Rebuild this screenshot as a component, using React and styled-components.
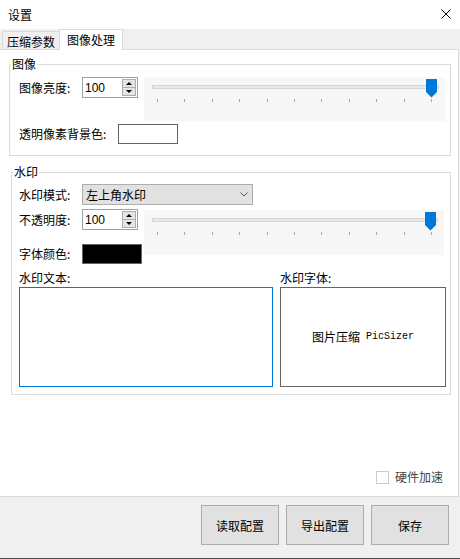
import styled, { createGlobalStyle } from "styled-components";

const GlobalStyle = createGlobalStyle`
  html, body {
    margin: 0;
    padding: 0;
    background: #ffffff;
  }
  body {
    font-family: "Noto Sans CJK SC", "Liberation Sans", sans-serif;
    font-size: 12px;
    line-height: 16px;
    color: #000;
  }
  * {
    box-sizing: border-box;
  }
`;

const Window = styled.div`
  width: 460px;
  height: 559px;
  display: flex;
  flex-direction: column;
  background: #f0f0f0;
  overflow: hidden;
`;

const TitleBar = styled.div`
  height: 29px;
  flex-shrink: 0;
  background: #ffffff;
  display: flex;
  align-items: center;
  justify-content: space-between;
  padding: 0 9px 0 8px;
`;

const CloseButton = styled.div`
  width: 10px;
  height: 10px;
  display: flex;
  margin-top: -2px;
`;

const TabStrip = styled.div`
  height: 20px;
  flex-shrink: 0;
  display: flex;
  align-items: flex-end;
  padding-left: 2px;
`;

const Tab = styled.div`
  position: relative;
  display: flex;
  align-items: center;
  justify-content: center;
  border: 1px solid #d9d9d9;
  border-bottom: none;
  width: ${(p) => (p.$active ? "64px" : "58px")};
  height: ${(p) => (p.$active ? "21px" : "18px")};
  margin-bottom: ${(p) => (p.$active ? "-1px" : "0")};
  margin-left: ${(p) => (p.$active ? "-1px" : "0")};
  padding-top: ${(p) => (p.$active ? "0" : "3px")};
  background: ${(p) => (p.$active ? "#ffffff" : "#f0f0f0")};
  z-index: ${(p) => (p.$active ? 1 : 0)};
`;

const Panel = styled.div`
  flex: 1;
  min-height: 0;
  margin-right: 1px;
  background: #ffffff;
  border: 1px solid #d9d9d9;
  border-left: none;
  display: flex;
  flex-direction: column;
  padding: 14px 7px 11px 9px;
`;

const GroupBox = styled.div`
  border: 1px solid #dcdcdc;
  margin-left: ${(p) => p.$ml || 0}px;
  margin-top: ${(p) => p.$mt || 0}px;
`;

const Legend = styled.div`
  width: fit-content;
  margin: -9px 0 0 1px;
  padding: 0 1px;
  background: #ffffff;
  line-height: 16px;
`;

const GroupBody = styled.div`
  display: flex;
  flex-direction: column;
  gap: ${(p) => p.$gap || 0}px;
  padding: ${(p) => p.$pad};
`;

const Row = styled.div`
  display: flex;
  align-items: flex-start;
`;

const FieldLabel = styled.div`
  flex-shrink: 0;
  width: ${(p) => (p.$w ? `${p.$w}px` : "auto")};
  height: ${(p) => p.$h || 21}px;
  display: flex;
  align-items: center;
  white-space: nowrap;
`;

const SpinBox = styled.div`
  width: 56px;
  height: 21px;
  border: 1px solid #a0a0a0;
  background: #ffffff;
  display: flex;
  align-items: center;
  padding-left: 2px;
  font-family: "Liberation Sans", Arial, sans-serif;
  font-size: 12px;
`;

const Spinner = styled.div`
  margin-left: auto;
  margin-right: 1px;
  width: 14px;
  height: 17px;
  display: flex;
  flex-direction: column;
  border: 1px solid #adadad;
  background: #e5e5e5;
`;

const SpinButton = styled.div`
  flex: 1;
  display: flex;
  align-items: center;
  justify-content: center;
  border-top: ${(p) => (p.$down ? "1px solid #adadad" : "none")};

  &::after {
    content: "";
    width: 0;
    height: 0;
    border-left: 3px solid transparent;
    border-right: 3px solid transparent;
    ${(p) =>
      p.$down ? "border-top: 3px solid #000;" : "border-bottom: 3px solid #000;"}
  }
`;

const SliderBox = styled.div`
  flex-shrink: 0;
  width: ${(p) => p.$w}px;
  height: ${(p) => p.$h}px;
  margin-left: ${(p) => p.$ml || 0}px;
  margin-top: ${(p) => p.$mt || 0}px;
  background: #f7f7f7;
  display: flex;
  grid-column: 3;
  grid-row: 2 / 4;
`;

const ColorBox = styled.div`
  width: 60px;
  height: 20px;
  border: 1px solid #646464;
  background: ${(p) => p.$color};
`;

const WatermarkGrid = styled.div`
  display: grid;
  grid-template-columns: 63px 62px 300px;
  grid-template-rows: 25px 35px 20px;
  align-items: start;
`;

const Combo = styled.div`
  grid-column: 2 / 4;
  width: 171px;
  height: 21px;
  border: 1px solid #adadad;
  background: #e1e1e1;
  display: flex;
  align-items: center;
  justify-content: space-between;
  padding: 0 4px 0 3px;
`;

const TextGrid = styled.div`
  display: grid;
  grid-template-columns: 254px 166px;
  column-gap: 7px;
  row-gap: 1px;
  margin-top: 6px;
`;

const WatermarkText = styled.textarea`
  display: block;
  width: 254px;
  height: 100px;
  margin: 0;
  padding: 0;
  resize: none;
  outline: none;
  border: 1px solid #0078d7;
  font-family: inherit;
  font-size: 12px;
`;

const FontPreview = styled.div`
  height: 100px;
  border: 1px solid #646464;
  display: flex;
  align-items: center;
  justify-content: center;
  gap: 6px;
`;

const PreviewLatin = styled.span`
  font-family: "Liberation Mono", "DejaVu Sans Mono", monospace;
  font-size: 10px;
`;

const CheckRow = styled.label`
  margin-top: auto;
  margin-right: 8px;
  align-self: flex-end;
  display: flex;
  align-items: center;
  gap: 6px;
  color: #444;
`;

const CheckBox = styled.span`
  width: 13px;
  height: 13px;
  border: 1px solid #cccccc;
  background: #ffffff;
`;

const Footer = styled.div`
  height: 61px;
  flex-shrink: 0;
  display: flex;
  justify-content: flex-end;
  align-items: flex-start;
  gap: 7px;
  padding: 8px 11px 0 0;
`;

const Button = styled.button`
  width: 78px;
  height: 40px;
  padding: 0;
  border: 1px solid #adadad;
  background: #e1e1e1;
  color: #000;
  font-family: inherit;
  font-size: 12px;
`;

const BottomEdge = styled.div`
  height: 1px;
  flex-shrink: 0;
  background: #4b4b4b;
`;

const TICKS = Array.from({ length: 11 }, (_, i) => Math.round(13 + i * 27.4));

const Slider = ({ width, height, thumbX, ml, mt }) => (
  <SliderBox $w={width} $h={height} $ml={ml} $mt={mt}>
    <svg width={width} height={height}>
      <rect x="8.5" y="8.5" width={width - 15} height="3" fill="#e7eaea" stroke="#d6d6d6" />
      {TICKS.map((x) => (
        <line key={x} x1={x + 0.5} y1="22" x2={x + 0.5} y2="25" stroke="#a8a8a8" />
      ))}
      <path
        d={`M${thumbX} 2 H${thumbX + 11} V15 L${thumbX + 5.5} 20.5 L${thumbX} 15 Z`}
        fill="#0078d7"
      />
    </svg>
  </SliderBox>
);

const Spin = ({ value }) => (
  <SpinBox>
    {value}
    <Spinner>
      <SpinButton />
      <SpinButton $down />
    </Spinner>
  </SpinBox>
);

const App = () => {
  return (
    <Window>
      <GlobalStyle />
      <TitleBar>
        <span>设置</span>
        <CloseButton>
          <svg width="10" height="10" viewBox="0 0 10 10">
            <path d="M0.5 0.5 L9.5 9.5 M9.5 0.5 L0.5 9.5" stroke="#000" strokeWidth="1" />
          </svg>
        </CloseButton>
      </TitleBar>

      <TabStrip>
        <Tab>压缩参数</Tab>
        <Tab $active>图像处理</Tab>
      </TabStrip>

      <Panel>
        <GroupBox>
          <Legend>图像</Legend>
          <GroupBody $gap={3} $pad="5px 4px 11px 9px">
            <Row>
              <FieldLabel $w={63}>图像亮度:</FieldLabel>
              <Spin value="100" />
              <Slider width={301} height={44} thumbX={282} ml={6} />
            </Row>
            <Row>
              <FieldLabel $w={99} $h={20}>
                透明像素背景色:
              </FieldLabel>
              <ColorBox $color="#ffffff" />
            </Row>
          </GroupBody>
        </GroupBox>

        <GroupBox $ml={2} $mt={16}>
          <Legend>水印</Legend>
          <GroupBody $pad="4px 4px 7px 7px">
            <WatermarkGrid>
              <FieldLabel>水印模式:</FieldLabel>
              <Combo>
                <span>左上角水印</span>
                <svg width="8" height="5" viewBox="0 0 8 5">
                  <polyline points="0.5,0.5 4,4 7.5,0.5" fill="none" stroke="#555" />
                </svg>
              </Combo>
              <FieldLabel>不透明度:</FieldLabel>
              <Spin value="100" />
              <Slider width={300} height={45} thumbX={281} mt={1} />
              <FieldLabel $h={20}>字体颜色:</FieldLabel>
              <ColorBox $color="#000000" />
            </WatermarkGrid>
            <TextGrid>
              <span>水印文本:</span>
              <span>水印字体:</span>
              <WatermarkText defaultValue="" />
              <FontPreview>
                <span>图片压缩</span>
                <PreviewLatin>PicSizer</PreviewLatin>
              </FontPreview>
            </TextGrid>
          </GroupBody>
        </GroupBox>

        <CheckRow>
          <CheckBox />
          硬件加速
        </CheckRow>
      </Panel>

      <Footer>
        <Button>读取配置</Button>
        <Button>导出配置</Button>
        <Button>保存</Button>
      </Footer>
      <BottomEdge />
    </Window>
  );
};

export default App;
